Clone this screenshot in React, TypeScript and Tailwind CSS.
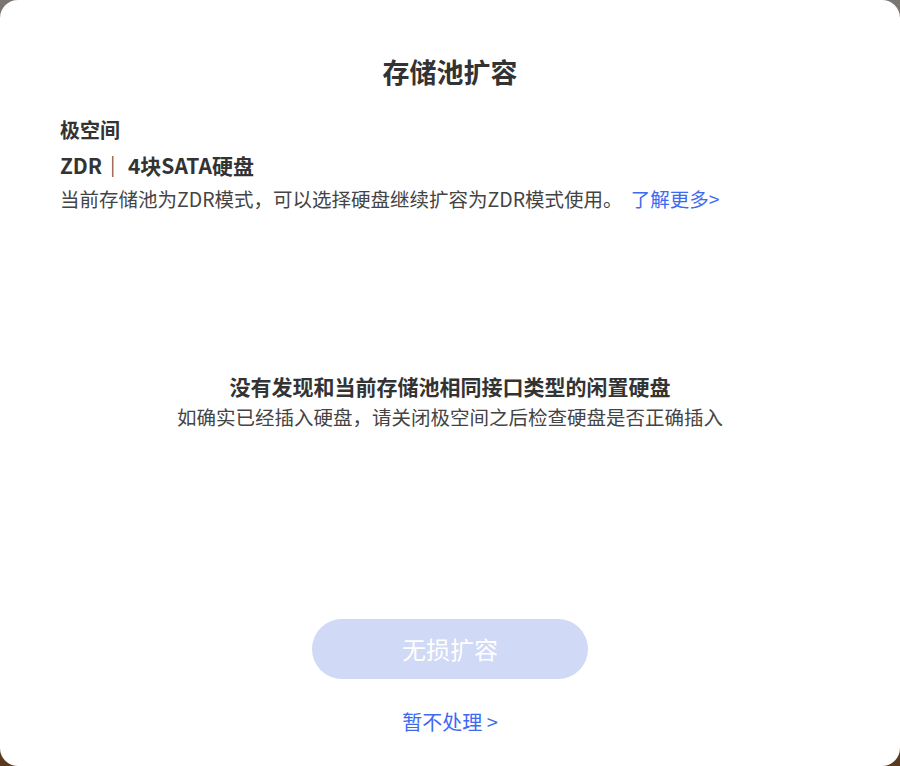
export default function App() {
  return (
    <div className="w-[900px] h-[766px] bg-gradient-to-b from-[#7a7672] via-[#6e5e50] to-[#5a3a1e] [font-family:'Noto_Sans_CJK_SC',sans-serif]">
      <div className="w-full h-full bg-white rounded-[18px] flex flex-col text-[#333]">
        {/* Header */}
        <h1 className="mt-[54px] text-center text-[27px] leading-[36px] font-bold">存储池扩容</h1>

        {/* Pool info */}
        <div className="px-[60px] mt-[26px]">
          <div className="text-[20px] leading-[28px] font-bold">极空间</div>
          <div className="mt-[7px] text-[21px] leading-[28px] font-bold">ZDR｜ 4块SATA硬盘</div>
          <p className="mt-[6px] text-[19.5px] leading-[28px] text-[#444]">
            当前存储池为ZDR模式，可以选择硬盘继续扩容为ZDR模式使用。
            <span className="ml-[8px] text-[#3d6af2]">了解更多&gt;</span>
          </p>
        </div>

        {/* Empty state */}
        <div className="mt-[158px] flex flex-col items-center">
          <div className="text-[21px] leading-[30px] font-bold">没有发现和当前存储池相同接口类型的闲置硬盘</div>
          <div className="mt-[2px] text-[19.5px] leading-[28px] text-[#444]">如确实已经插入硬盘，请关闭极空间之后检查硬盘是否正确插入</div>
        </div>

        {/* Actions */}
        <div className="mt-auto mb-[30px] flex flex-col items-center">
          <button className="w-[276px] h-[60px] rounded-full bg-[#d0d9f6] text-white text-[24px]">无损扩容</button>
          <button className="mt-[29px] text-[20px] leading-[28px] text-[#3d6af2]">暂不处理 &gt;</button>
        </div>
      </div>
    </div>
  );
}
